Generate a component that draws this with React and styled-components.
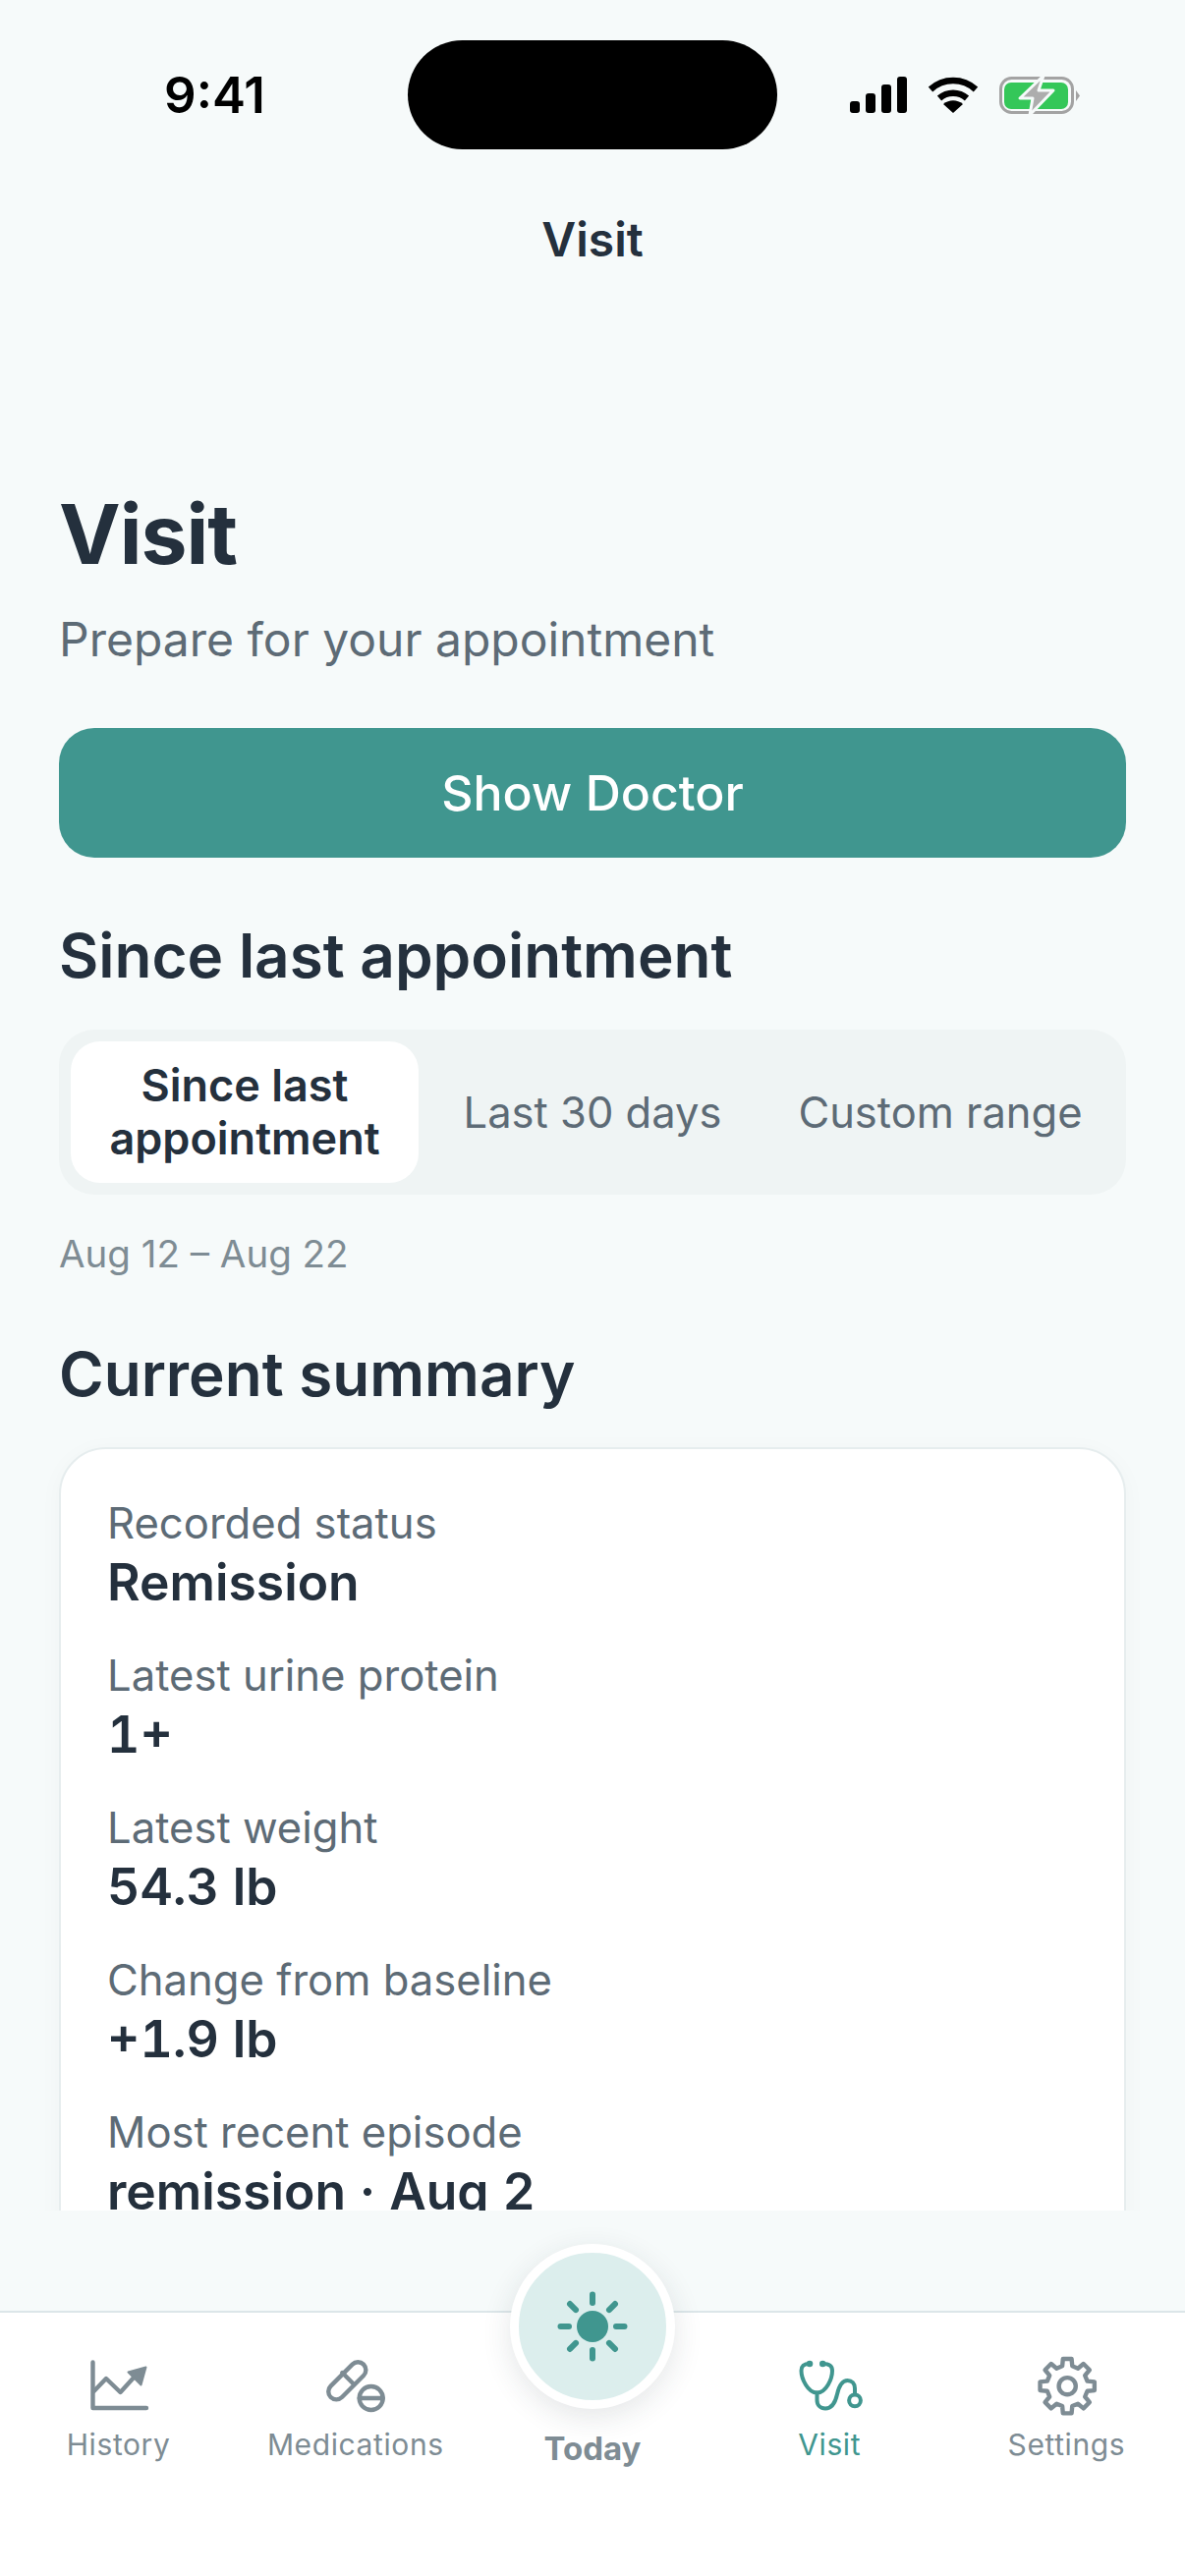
import React from "react";
import styled, { createGlobalStyle } from "styled-components";

const GlobalStyle = createGlobalStyle`
	html, body {
		margin: 0;
		padding: 0;
		background: #f6fafa;
	}
	* {
		box-sizing: border-box;
	}
`;

const summary = [
	{ label: "Recorded status", value: "Remission" },
	{ label: "Latest urine protein", value: "1+" },
	{ label: "Latest weight", value: "54.3 lb" },
	{ label: "Change from baseline", value: "+1.9 lb" },
	{ label: "Most recent episode", value: "remission · Aug 2" }
];

const rays = [0, 45, 90, 135, 180, 225, 270, 315];

// 8 tooth gear outline, top tooth pointing straight up
const gearPath = () => {
	const cx = 51.2;
	const cy = 43.7;
	const point = (r, deg) => {
		const a = ((deg - 90) * Math.PI) / 180;
		return `${(cx + r * Math.cos(a)).toFixed(2)} ${(cy + r * Math.sin(a)).toFixed(2)}`;
	};
	let d = "";
	for (let i = 0; i < 8; i++) {
		const c = i * 45;
		d += `${i === 0 ? "M" : "L"}${point(21, c - 14)} L${point(28, c - 9)} L${point(28, c + 9)} L${point(21, c + 14)} `;
	}
	return d + "Z";
};

const App = () => {
	return (
		<Screen>
			<GlobalStyle />
			<StatusBar>
				<Time>9:41</Time>
				<Island />
				<StatusIcons>
					<svg width="58" height="37" viewBox="0 0 58 37">
						<rect x="0" y="25" width="10" height="12" rx="3" />
						<rect x="16" y="17" width="10" height="20" rx="3" />
						<rect x="32" y="8" width="10" height="29" rx="3" />
						<rect x="48" y="0" width="10" height="37" rx="3" />
					</svg>
					<svg width="52" height="37" viewBox="0 0 52 37" fill="none" stroke="#000" strokeWidth="6.5">
						<path d="M3 13C16 1 36 1 49 13" />
						<path d="M12 22C20 15 32 15 40 22" />
						<path d="M16 28L26 37L36 28C30 23 22 23 16 28Z" fill="#000" stroke="none" />
					</svg>
					<svg width="84" height="40" viewBox="0 0 84 40" overflow="visible">
						<rect x="1.5" y="2.5" width="73" height="35" rx="11" fill="none" stroke="#a3a3a3" strokeWidth="3" />
						<rect x="5" y="7" width="65" height="27" rx="7" fill="#34c759" />
						<path d="M78 15V26L82 20.5Z" fill="#a3a3a3" />
						<path d="M45 0L21 23H34L31 40L55 15H40Z" fill="#adadad" stroke="#f6fafa" strokeWidth="3" strokeLinejoin="round" />
					</svg>
				</StatusIcons>
			</StatusBar>
			<NavTitle>Visit</NavTitle>
			<Content>
				<PageTitle>Visit</PageTitle>
				<Subtitle>Prepare for your appointment</Subtitle>
				<PrimaryButton>Show Doctor</PrimaryButton>
				<SectionTitle>Since last appointment</SectionTitle>
				<Segments>
					<Segment $active>Since last appointment</Segment>
					<Segment>Last 30 days</Segment>
					<Segment>Custom range</Segment>
				</Segments>
				<DateRange>Aug 12 – Aug 22</DateRange>
				<SummaryTitle>Current summary</SummaryTitle>
				<Card>
					{summary.map((row) => (
						<Row key={row.label}>
							<Label>{row.label}</Label>
							<Value>{row.value}</Value>
						</Row>
					))}
				</Card>
			</Content>
			<TabBar>
				<Tab>
					<TabIcon>
						<svg width="100" height="90" viewBox="0 0 100 90" fill="none" stroke="currentColor" strokeWidth="4.4" strokeLinecap="round" strokeLinejoin="round">
							<path d="M23.5 19.5V66H78" />
							<path d="M24.5 49L37 36L51.5 50L66 34" />
							<path d="M59.5 29.5L77.5 24.5L72.5 42.5Z" fill="currentColor" strokeWidth="2" />
						</svg>
					</TabIcon>
					<TabLabel>History</TabLabel>
				</Tab>
				<Tab>
					<TabIcon>
						<svg width="100" height="90" viewBox="-3 0 100 90" fill="none" stroke="currentColor" strokeWidth="4.4" strokeLinecap="round" strokeLinejoin="round">
							<path d="M43.6 21.6A8 8 0 0 1 55 33L33 55A8 8 0 0 1 21.6 43.6Z" />
							<path d="M33.3 30L45 41.7" />
							<circle cx="62.7" cy="56" r="12" />
							<path d="M50.7 56H74.7" />
						</svg>
					</TabIcon>
					<TabLabel>Medications</TabLabel>
				</Tab>
				<CenterTab>
					<SunButton>
						<svg width="72" height="72" viewBox="0 0 72 72" stroke="#40968f" strokeWidth="6" strokeLinecap="round">
							<circle cx="36" cy="36" r="16" fill="#40968f" stroke="none" />
							{rays.map((deg) => (
								<path key={deg} d="M36 3.5V12" transform={`rotate(${deg} 36 36)`} />
							))}
						</svg>
					</SunButton>
					<CenterLabel>Today</CenterLabel>
				</CenterTab>
				<Tab $active>
					<TabIcon>
						<svg width="100" height="90" viewBox="0 0 100 90" fill="none" stroke="currentColor" strokeWidth="4" strokeLinecap="round" strokeLinejoin="round">
							<path d="M30 21C24 21 21.5 23 21.5 28C21.5 36 28 50.5 37.5 50.5C47 50.5 53 36 53 28C53 23 50 21 43.3 21" />
							<circle cx="30" cy="21" r="3.3" fill="currentColor" stroke="none" />
							<circle cx="43.3" cy="21" r="3.3" fill="currentColor" stroke="none" />
							<path d="M37.5 50.5V58C37.5 63 41 66.5 46 66.5C53 66.5 56 61 58 52C60 43 63 38 68.5 38C73 38 76 41 76 46V52" />
							<circle cx="76" cy="58.3" r="5.9" />
						</svg>
					</TabIcon>
					<TabLabel>Visit</TabLabel>
				</Tab>
				<Tab>
					<TabIcon>
						<svg width="100" height="90" viewBox="0 0 100 90" fill="none" stroke="currentColor" strokeWidth="4.4" strokeLinecap="round" strokeLinejoin="round">
							<path d={gearPath()} />
							<circle cx="51.2" cy="43.7" r="8.6" />
						</svg>
					</TabIcon>
					<TabLabel>Settings</TabLabel>
				</Tab>
			</TabBar>
		</Screen>
	);
};

export default App;

const Screen = styled.div`
	width: 1206px;
	height: 2622px;
	background: #f6fafa;
	font-family: Inter, "Liberation Sans", sans-serif;
	color: #24303d;
	display: flex;
	flex-direction: column;
	overflow: hidden;
`;

const StatusBar = styled.div`
	height: 152px;
	padding-top: 41px;
	display: flex;
	align-items: flex-start;
	flex-shrink: 0;
`;

const Time = styled.div`
	width: 415px;
	height: 111px;
	padding-left: 22px;
	display: flex;
	align-items: center;
	justify-content: center;
	font-size: 51px;
	font-weight: 600;
	color: #000;
`;

const Island = styled.div`
	width: 376px;
	height: 111px;
	border-radius: 56px;
	background: #000;
`;

const StatusIcons = styled.div`
	height: 111px;
	display: flex;
	align-items: center;
	gap: 21px;
	padding-left: 74px;
`;

const NavTitle = styled.div`
	height: 62px;
	margin-top: 61px;
	font-size: 48px;
	line-height: 62px;
	font-weight: 600;
	text-align: center;
	flex-shrink: 0;
`;

const Content = styled.div`
	height: 1975px;
	flex-shrink: 0;
	overflow: hidden;
	padding: 219px 60px 0;
	margin-bottom: 102px;
`;

const PageTitle = styled.h1`
	margin: 0;
	font-size: 84px;
	line-height: 100px;
	font-weight: 700;
	letter-spacing: -1px;
`;

const Subtitle = styled.div`
	margin-top: 27px;
	font-size: 48px;
	line-height: 60px;
	color: #5d6b76;
`;

const PrimaryButton = styled.div`
	height: 132px;
	margin-top: 60px;
	border-radius: 36px;
	background: #40968f;
	color: #fff;
	font-size: 50px;
	font-weight: 500;
	display: flex;
	align-items: center;
	justify-content: center;
`;

const SectionTitle = styled.h2`
	margin: 0;
	margin-top: 64px;
	font-size: 62px;
	line-height: 72px;
	font-weight: 600;
`;

const SummaryTitle = styled(SectionTitle)`
	margin-top: 63px;
`;

const Segments = styled.div`
	margin-top: 39px;
	height: 168px;
	padding: 12px;
	border-radius: 36px;
	background: #eff4f4;
	display: flex;
	align-items: stretch;
`;

const Segment = styled.div`
	flex: ${(props) => (props.$active ? "0 0 354px" : "1 1 0")};
	border-radius: 30px;
	background: ${(props) => (props.$active ? "#fff" : "transparent")};
	color: ${(props) => (props.$active ? "#24303d" : "#5d6b76")};
	font-size: ${(props) => (props.$active ? "45px" : "43.5px")};
	line-height: 54px;
	font-weight: ${(props) => (props.$active ? 600 : 400)};
	display: flex;
	align-items: center;
	justify-content: center;
	text-align: center;
	padding: 0 24px;
	white-space: ${(props) => (props.$active ? "normal" : "nowrap")};
`;

const DateRange = styled.div`
	margin-top: 36px;
	font-size: 38.5px;
	line-height: 48px;
	color: #7e8c94;
`;

const Card = styled.div`
	margin-top: 38px;
	padding: 49px 47px 0;
	background: #fff;
	border: 2px solid #e6edee;
	border-radius: 48px;
	box-shadow: 0 4px 24px rgba(36, 48, 61, 0.03);
`;

const Row = styled.div`
	height: 155px;
`;

const Label = styled.div`
	font-size: 43.6px;
	line-height: 54px;
	color: #5d6b76;
`;

const Value = styled.div`
	font-size: 51.6px;
	line-height: 64px;
	font-weight: 600;
	font-feature-settings: "tnum";
`;

const TabBar = styled.div`
	position: relative;
	flex: 1;
	background: #fff;
	border-top: 2px solid #dce6e9;
	display: grid;
	grid-template-columns: repeat(5, 1fr);
	align-items: start;
`;

const Tab = styled.div`
	color: ${(props) => (props.$active ? "#40968f" : "#7e8c94")};
	display: flex;
	flex-direction: column;
	align-items: center;
	padding-top: 31px;
`;

const TabIcon = styled.div`
	height: 90px;
	display: flex;
	align-items: center;
	justify-content: center;
`;

const TabLabel = styled.div`
	margin-top: -6px;
	font-size: 30px;
	line-height: 38px;
	letter-spacing: 0.6px;
`;

const CenterTab = styled.div`
	display: flex;
	flex-direction: column;
	align-items: center;
	color: #7e8c94;
	margin-top: -70px;
`;

const SunButton = styled.div`
	width: 168px;
	height: 168px;
	border-radius: 50%;
	background: #dceeed;
	border: 9px solid #fff;
	box-shadow: 0 8px 30px rgba(36, 48, 61, 0.12);
	display: flex;
	align-items: center;
	justify-content: center;
`;

const CenterLabel = styled.div`
	margin-top: 20px;
	font-size: 33px;
	line-height: 40px;
	font-weight: 700;
`;
